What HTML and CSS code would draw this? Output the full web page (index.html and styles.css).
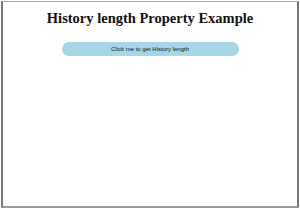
FILE: index.html
```html
<!DOCTYPE html>
<html lang="en">
<head>
    <meta charset="UTF-8">
    <title>History length Property</title>
    <link rel="stylesheet" href="styles.css">
</head>
<body>
    <div class="frame">
        <h1>History length Property Example</h1>
        <button class="get-length" id="get-length">Click me to get History length</button>
        <p class="result" id="result"></p>
    </div>
    <script>
        document.getElementById('get-length').addEventListener('click', () => {
            document.getElementById('result').textContent = history.length;
        });
    </script>
</body>
</html>
```

FILE: styles.css
```css
body {
    margin: 0;
    padding: 1px;
    background: #fff;
}
.frame {
    border: 1px solid #aaa;
    border-left: 2px solid #777;
    border-right: 2px solid #777;
    border-bottom: 2px solid #999;
    box-sizing: border-box;
    height: 207px;
    display: flex;
    flex-direction: column;
    align-items: center;
}
h1 {
    margin: 8px 0 0;
    font-family: "Liberation Serif", serif;
    font-size: 14.5px;
    color: #111;
}
.get-length {
    margin-top: 15px;
    width: 177px;
    height: 14px;
    padding: 0;
    border: none;
    border-radius: 7px;
    background-color: #a7d6e6;
    font-family: "Liberation Sans", Arial, sans-serif;
    font-size: 6px;
    color: #111;
    cursor: pointer;
}
.result {
    margin: 0;
}
```
